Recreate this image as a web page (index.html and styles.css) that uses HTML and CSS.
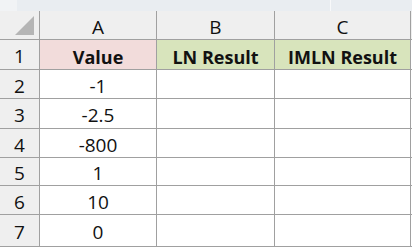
FILE: index.html
```html
<!DOCTYPE html>
<html>
<head>
<meta charset="utf-8">
<link rel="stylesheet" href="styles.css">
</head>
<body>
<div class="topbar"><div class="tb-left"></div><div class="tb-mid"></div><div class="tb-right"></div></div>
<div class="sheet">
  <div class="corner"><svg width="20" height="20" viewBox="0 0 20 20"><polygon points="0,19 19,0 19,19" fill="#b5b5b5"/></svg></div>
  <div class="ch">A</div><div class="ch">B</div><div class="ch">C</div><div class="edge hd"></div>

  <div class="rh">1</div><div class="c b pink">Value</div><div class="c b green">LN Result</div><div class="c b green">IMLN Result</div><div class="edge"></div>
  <div class="rh">2</div><div class="c">-1</div><div class="c"></div><div class="c"></div><div class="edge"></div>
  <div class="rh">3</div><div class="c">-2.5</div><div class="c"></div><div class="c"></div><div class="edge"></div>
  <div class="rh">4</div><div class="c">-800</div><div class="c"></div><div class="c"></div><div class="edge"></div>
  <div class="rh">5</div><div class="c">1</div><div class="c"></div><div class="c"></div><div class="edge"></div>
  <div class="rh">6</div><div class="c">10</div><div class="c"></div><div class="c"></div><div class="edge"></div>
  <div class="rh">7</div><div class="c">0</div><div class="c"></div><div class="c"></div><div class="edge"></div>
</div>
</body>
</html>
```
FILE: styles.css
```css
html, body {
  margin: 0;
  padding: 0;
  background: #ffffff;
}
body {
  width: 412px;
  height: 248px;
  overflow: hidden;
  font-family: "Open Sans", "Noto Sans", sans-serif;
  color: #111;
}
.topbar {
  height: 11px;
  display: flex;
  background: #e9edf1;
}
.tb-left {
  width: 17px;
  background: #f1f3f5;
}
.tb-mid {
  width: 313px;
  border-right: 1px solid #f8f9fa;
}
.tb-right {
  flex: 1;
}
.sheet {
  display: grid;
  grid-template-columns: 40px 117px 118px 136px 1px;
  grid-template-rows: 29px 30px 29px 30px 29px 28px 29px 32px;
}
.sheet > div {
  box-sizing: border-box;
  border-right: 1px solid #a0a0a0;
  border-bottom: 1px solid #a0a0a0;
  display: flex;
  align-items: center;
  justify-content: center;
  padding-top: 4px;
  font-size: 19px;
  line-height: 1;
  white-space: nowrap;
}
.corner {
  background: #efefef;
  justify-content: flex-end !important;
  align-items: flex-end !important;
  padding: 0 4px 3px 0 !important;
}
.corner svg {
  display: block;
}
.ch {
  background: #efefef;
}
.rh {
  background: #efefef;
}
.c {
  background: #ffffff;
}
.sheet > .b {
  font-weight: 700;
  font-size: 18px;
}
.pink {
  background: #f2dcdb;
}
.green {
  background: #d8e4bc;
}
.edge {
  border-right: none !important;
  background: #ffffff;
}
.edge.hd {
  background: #efefef;
}
```
